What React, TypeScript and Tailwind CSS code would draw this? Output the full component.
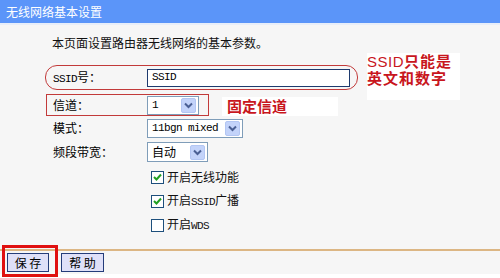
import React from "react";

const cjk = "font-['Noto_Sans_CJK_SC','Noto_Sans',sans-serif]";
const mono = "font-['Liberation_Mono','Noto_Sans_CJK_SC',monospace] text-[11px] tracking-[-0.6px]";

function Chevron() {
  return (
    <div className="w-[15px] h-[15px] rounded-[2px] bg-[#c3d3fa] border border-[#b3c6f3] flex items-center justify-center">
      <svg width="9" height="7" viewBox="0 0 9 7">
        <path d="M1 1.5 L4.5 5 L8 1.5" fill="none" stroke="#4a5f94" strokeWidth="2" />
      </svg>
    </div>
  );
}

function Check({ checked, label }: { checked: boolean; label: React.ReactNode }) {
  return (
    <div className="h-[24px] flex items-center pl-[105px] gap-[3px]">
      <div className="w-[13px] h-[13px] border border-[#1d4f7c] bg-white flex items-center justify-center">
        {checked && (
          <svg width="9" height="8" viewBox="0 0 9 8">
            <path d="M1 4 L3.5 6.5 L8 1.5" fill="none" stroke="#22a022" strokeWidth="2" />
          </svg>
        )}
      </div>
      <span className="text-[12px] text-[#111]">{label}</span>
    </div>
  );
}

export default function App() {
  return (
    <div className={`relative w-[500px] h-[278px] bg-white ${cjk} text-black overflow-hidden`}>
      <div className="h-[23px] bg-[#5b95f9] text-white text-[12px] leading-[23px] pl-[6px]">无线网络基本设置</div>
      <div className="h-[2px] bg-[#e8eef9]" />
      <div className="h-[249px] bg-[#f6f6f6] flex flex-col">
        <div className="pt-[10px] pl-[52px] text-[12px] leading-[16px] text-[#111]">本页面设置路由器无线网络的基本参数。</div>
        <div className="mt-[14px] ml-[45px] w-[313px] h-[25px] rounded-[12px] border border-[#c23a3a] flex items-center pl-[7px]">
          <span className="w-[94px] text-[12px]">
            <span className={mono}>SSID</span>号：
          </span>
          <div className={`w-[203px] h-[18px] border border-[#1e3a6e] bg-white flex items-center pl-[4px] ${mono}`}>SSID</div>
        </div>
        <div className="mt-[4px] ml-[46px] w-[163px] h-[22px] border border-[#c23a3a] flex items-center pl-[6px]">
          <span className="w-[94px] text-[12px]">信道：</span>
          <div className="w-[52px] h-[19px] border border-[#7f9db9] bg-white flex items-center justify-between pl-[4px] pr-[2px]">
            <span className={mono}>1</span>
            <Chevron />
          </div>
        </div>
        <div className="mt-[1px] ml-[46px] h-[22px] flex items-center pl-[7px]">
          <span className="w-[94px] text-[12px]">模式：</span>
          <div className="w-[96px] h-[19px] border border-[#7f9db9] bg-white flex items-center justify-between pl-[4px] pr-[2px]">
            <span className={mono}>11bgn mixed</span>
            <Chevron />
          </div>
        </div>
        <div className="mt-[2px] ml-[46px] h-[22px] flex items-center pl-[7px]">
          <span className="w-[94px] text-[12px]">频段带宽：</span>
          <div className="w-[61px] h-[20px] border border-[#7f9db9] bg-white flex items-center justify-between pl-[4px] pr-[2px]">
            <span className="text-[12px]">自动</span>
            <Chevron />
          </div>
        </div>
        <div className="mt-[2px] ml-[46px] flex flex-col">
          <Check checked label="开启无线功能" />
          <Check checked label={<>开启<span className={mono}>SSID</span>广播</>} />
          <Check checked={false} label={<>开启<span className={mono}>WDS</span></>} />
        </div>
        <div className="mt-auto border-t-2 border-[#dcb684] h-[25px] flex items-center pl-[7px] gap-[12px]">
          <button className="w-[42px] h-[19px] bg-[#dfe0f8] border border-[#243c7a] text-[12px] leading-[17px] text-black">保 存</button>
          <button className="w-[43px] h-[19px] bg-[#dfe0f8] border border-[#243c7a] text-[12px] leading-[17px] text-black">帮 助</button>
        </div>
      </div>

      <div className="absolute left-[367px] top-[53px] w-[93px] h-[47px] bg-white flex flex-col gap-[1px]">
        <div className="h-[16px] text-[15px] leading-[16px] tracking-[1px] font-bold text-[#c8161d] whitespace-nowrap">
          <span className="font-normal font-['Liberation_Sans',sans-serif] text-[15px] tracking-[0.5px]">SSID</span>只能是
        </div>
        <div className="h-[16px] text-[15px] leading-[16px] tracking-[1px] font-bold text-[#c8161d] whitespace-nowrap">英文和数字</div>
      </div>
      <div className="absolute left-[222px] top-[97px] w-[116px] h-[19px] bg-white pl-[5px]">
        <div className="text-[15px] leading-[18px] font-bold text-[#c8161d]">固定信道</div>
      </div>
      <div className="absolute left-[2px] top-[245px] w-[56px] h-[32px] border-[3px] border-[#e01010]" />
    </div>
  );
}
